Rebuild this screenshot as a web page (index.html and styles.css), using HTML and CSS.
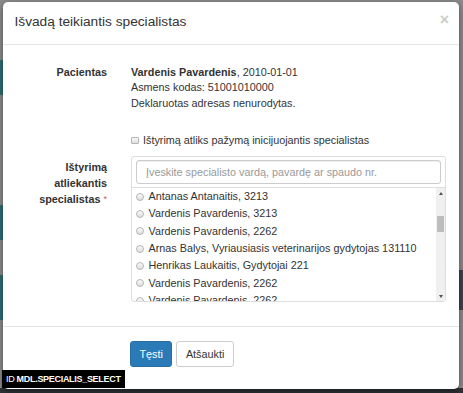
FILE: index.html
```html
<!DOCTYPE html>
<html lang="lt">
<head>
    <meta charset="UTF-8">
    <meta name="viewport" content="width=device-width, initial-scale=1.0">
    <title>Išvadą teikiantis specialistas</title>
    <link rel="stylesheet" href="styles.css">
</head>
<body>
    <div class="modal">
        <div class="modal-header">
            <h4 class="modal-title">Išvadą teikiantis specialistas</h4>
            <span class="close">&times;</span>
        </div>
        <div class="modal-body">
            <div class="form-row">
                <div class="control-label">Pacientas</div>
                <div class="static">
                    <div><b>Vardenis Pavardenis</b>, 2010-01-01</div>
                    <div>Asmens kodas: 51001010000</div>
                    <div>Deklaruotas adresas nenurodytas.</div>
                </div>
            </div>
            <div class="form-row row-check">
                <label class="checkbox"><input type="checkbox">Ištyrimą atliks pažymą inicijuojantis specialistas</label>
            </div>
            <div class="form-row row-picker">
                <div class="control-label tall">Ištyrimą atliekantis specialistas<span class="required">*</span></div>
                <div class="picker">
                    <div class="picker-search">
                        <input type="text" placeholder="Įveskite specialisto vardą, pavardę ar spaudo nr.">
                    </div>
                    <div class="picker-list">
                        <ul class="options">
                            <li class="option"><input type="radio" name="spec">Antanas Antanaitis, 3213</li>
                            <li class="option"><input type="radio" name="spec">Vardenis Pavardenis, 3213</li>
                            <li class="option"><input type="radio" name="spec">Vardenis Pavardenis, 2262</li>
                            <li class="option"><input type="radio" name="spec">Arnas Balys, Vyriausiasis veterinarijos gydytojas 131110</li>
                            <li class="option"><input type="radio" name="spec">Henrikas Laukaitis, Gydytojai 221</li>
                            <li class="option"><input type="radio" name="spec">Vardenis Pavardenis, 2262</li>
                            <li class="option"><input type="radio" name="spec">Vardenis Pavardenis, 2262</li>
                        </ul>
                        <div class="scrollbar">
                            <div class="sb-btn sb-up"></div>
                            <div class="sb-track"><div class="sb-thumb"></div></div>
                            <div class="sb-btn sb-down"></div>
                        </div>
                    </div>
                </div>
            </div>
        </div>
        <div class="modal-footer">
            <button class="btn btn-primary">Tęsti</button>
            <button class="btn btn-default">Atšaukti</button>
        </div>
        <div class="debug-id">ID <b>MDL.SPECIALIS_SELECT</b></div>
    </div>
</body>
</html>
```
FILE: styles.css
```css
body{
    margin: 0;
    height: 393px;
    overflow: hidden;
    font-family: "Liberation Sans", Arial, sans-serif;
    font-size: 10.8px;
    color: #333;
    background:
        linear-gradient(to bottom, transparent 60px, #2f6e72 60px 95px, transparent 95px 205px, #2f6e72 205px 240px, transparent 240px 275px, #2f6e72 275px 320px, transparent 320px) left top / 3px 100% no-repeat,
        linear-gradient(to bottom, transparent 270px, #3a4450 270px 310px, transparent 310px) right top / 4px 100% no-repeat,
        linear-gradient(to bottom, #8c8c8c 0 388px, #2e3236 388px);
}

.modal{
    position: relative;
    margin: 2px 0 0 3px;
    width: 456px;
    background-color: #fff;
    border-radius: 5px;
    box-shadow: 0 2px 7px rgba(0, 0, 0, .45);
}

.modal-header{
    display: flex;
    justify-content: space-between;
    align-items: center;
    padding: 10px 10px 12px 11.5px;
    border-bottom: 1px solid #e5e5e5;
}

.modal-title{
    margin: 0;
    font-size: 13.7px;
    line-height: 20px;
    font-weight: normal;
}

.close{
    font-size: 16px;
    font-weight: bold;
    line-height: 1;
    color: #000;
    opacity: .2;
    margin-top: -4px;
}

.modal-body{
    padding: 20px 13px 24px 12px;
}

.form-row{
    display: grid;
    grid-template-columns: 92px 1fr;
    column-gap: 24px;
    line-height: 15.3px;
}

.row-check{
    margin-top: 22px;
}

.row-picker{
    margin-top: 8px;
}

.control-label{
    text-align: right;
    font-weight: bold;
}

.control-label.tall{
    line-height: 16.3px;
    padding-top: 2.7px;
}

.required{
    color: #d9534f;
    font-weight: normal;
    font-size: 9px;
    margin-left: 3px;
    vertical-align: 1px;
}

.checkbox{
    grid-column: 2;
    display: flex;
    align-items: center;
}

.checkbox input,
.option input{
    appearance: none;
    margin: 0;
    flex: none;
    border: 1px solid #b5b5b5;
    background: linear-gradient(#fafafa, #dedede);
}

.checkbox input{
    width: 7.5px;
    height: 7.5px;
    border-radius: 1px;
    margin-right: 4.5px;
}

.picker{
    border: 1px solid #ddd;
    border-radius: 3px;
}

.picker-search{
    padding: 3px 4px;
}

.picker-search input{
    display: block;
    box-sizing: border-box;
    width: 100%;
    height: 24px;
    padding: 0 9px;
    border: 1px solid #ccc;
    border-radius: 3px;
    font: inherit;
    color: #555;
    box-shadow: inset 0 1px 1px rgba(0, 0, 0, .075);
}

.picker-search input::placeholder{
    color: #999;
}

.picker-list{
    display: flex;
    height: 113px;
    border-top: 1px solid #ddd;
    overflow: hidden;
}

.options{
    flex: 1;
    list-style: none;
    margin: 0;
    padding: 0;
    overflow: hidden;
}

.option{
    display: flex;
    align-items: center;
    height: 17.3px;
    white-space: nowrap;
}

.option input{
    width: 8px;
    height: 8px;
    border-radius: 50%;
    margin: 0 4.5px 0 4px;
}

.scrollbar{
    display: flex;
    flex-direction: column;
    width: 9px;
    background-color: #f0f0f0;
}

.sb-btn{
    height: 10px;
    display: flex;
    align-items: center;
    justify-content: center;
}

.sb-up::before,
.sb-down::before{
    content: "";
    border-left: 2.5px solid transparent;
    border-right: 2.5px solid transparent;
}

.sb-up::before{
    border-bottom: 3px solid #505050;
}

.sb-down::before{
    border-top: 3px solid #505050;
}

.sb-track{
    flex: 1;
}

.sb-thumb{
    margin: 17.7px 1px 0;
    height: 16px;
    background-color: #bdbdbd;
}

.modal-footer{
    display: flex;
    gap: 4px;
    padding: 14px 12px 22px 127px;
    border-top: 1px solid #e5e5e5;
}

.btn{
    height: 26px;
    padding: 0 8.5px;
    font: inherit;
    border: 1px solid;
    border-radius: 3px;
}

.btn-primary{
    background-color: #2b7ab8;
    border-color: #2a6da4;
    color: #fff;
}

.btn-default{
    background-color: #fff;
    border-color: #ccc;
    color: #333;
}

.debug-id{
    position: absolute;
    left: -1px;
    top: 368px;
    height: 18px;
    padding: 0 4px;
    background-color: #000;
    color: #fff;
    font-size: 9px;
    letter-spacing: -0.3px;
    line-height: 18px;
}
```
